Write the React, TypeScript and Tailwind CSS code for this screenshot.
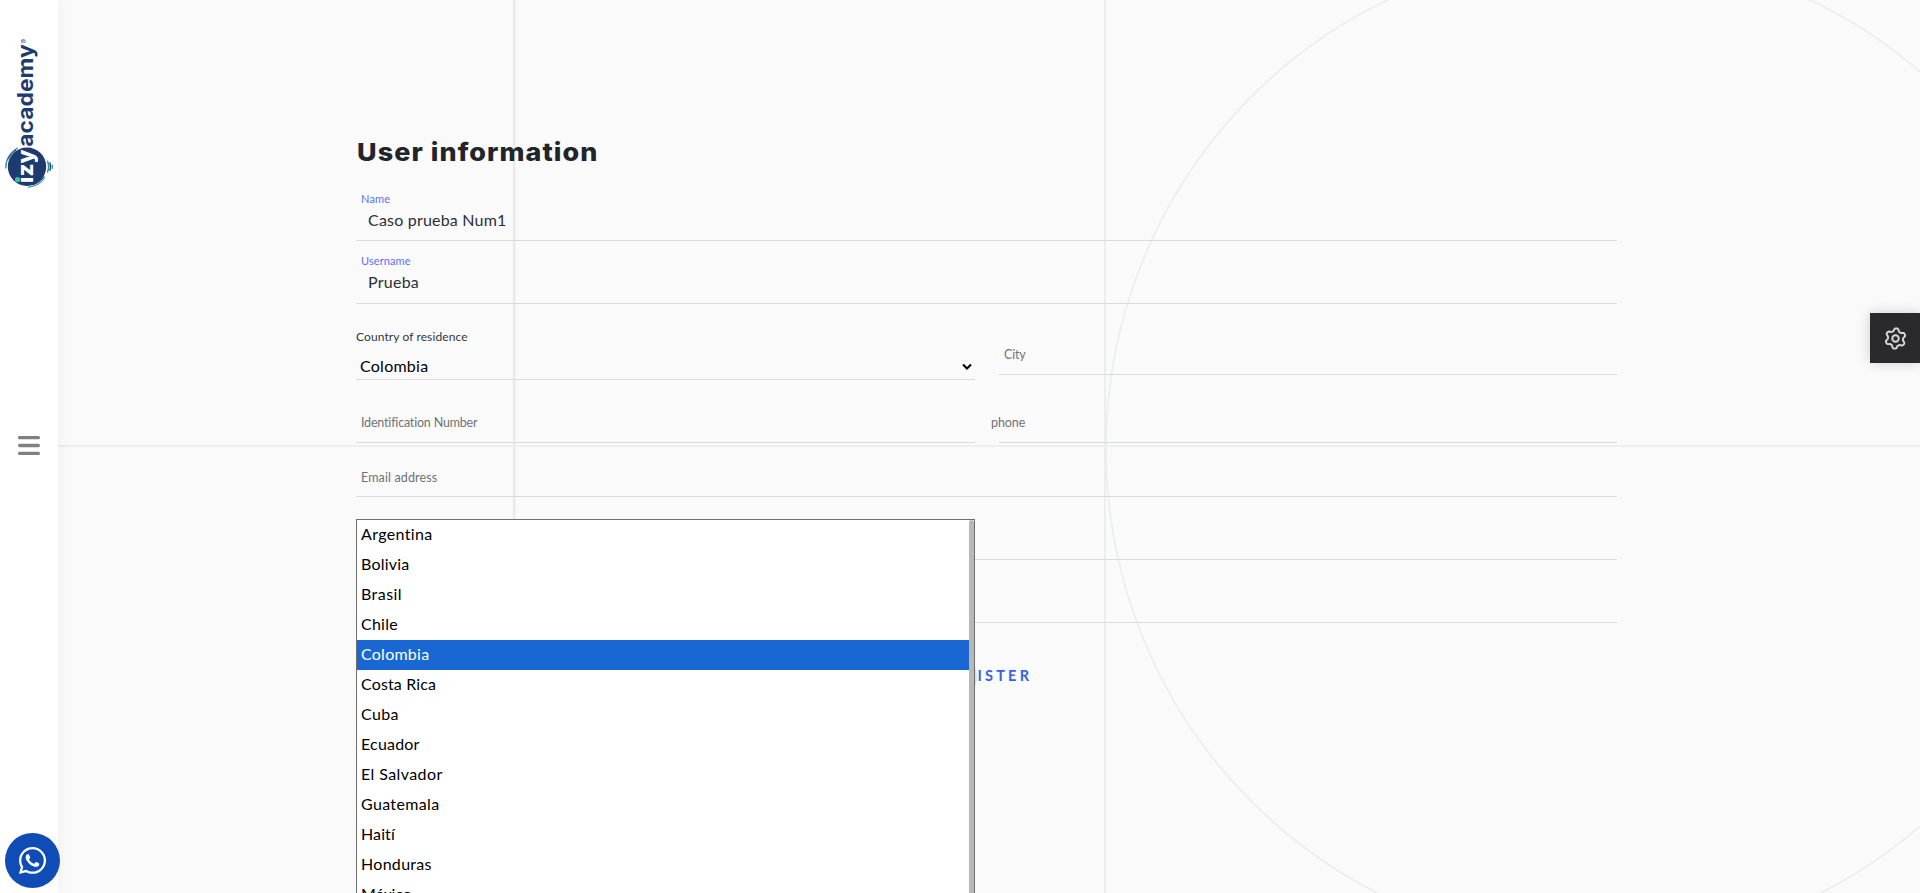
import type { ReactNode } from "react";
import { FaWhatsapp } from "react-icons/fa";

const countries = [
  { name: "Argentina", tracking: "tracking-[0.35px]" },
  { name: "Bolivia", tracking: "tracking-[0.2px]" },
  { name: "Brasil", tracking: "tracking-[0.45px]" },
  { name: "Chile", tracking: "tracking-[0.25px]" },
  { name: "Colombia", tracking: "tracking-[0.25px]", selected: true },
  { name: "Costa Rica", tracking: "tracking-[0.15px]" },
  { name: "Cuba", tracking: "tracking-[0.35px]" },
  { name: "Ecuador", tracking: "tracking-[0.2px]" },
  { name: "El Salvador", tracking: "tracking-[0.4px]" },
  { name: "Guatemala", tracking: "tracking-[0.35px]" },
  { name: "Haití", tracking: "tracking-[0.1px]" },
  { name: "Honduras", tracking: "tracking-[0.3px]" },
  { name: "México", tracking: "tracking-[-0.1px]" },
];

function gearPath() {
  const pts: string[] = [];
  for (let i = 0; i < 120; i++) {
    const a = (i / 120) * Math.PI * 2;
    const lobe = Math.tanh(1.6 * Math.cos(6 * (a + Math.PI / 2 - 0.1)));
    const r = 8.5 + 1.35 * lobe;
    pts.push(`${(12 + r * Math.cos(a)).toFixed(2)} ${(12 + r * Math.sin(a)).toFixed(2)}`);
  }
  return `M${pts.join("L")}Z`;
}

function Logo() {
  return (
    <svg width="58" height="200" viewBox="0 0 58 200" className="block">
      <g fill="none" strokeLinecap="round">
        <path d="M5.8 168 A22 22 0 0 1 17.5 148" stroke="#3d8f97" strokeWidth="1.3" />
        <path d="M8 159 A21 21 0 0 1 16 150" stroke="#1d3b70" strokeWidth="1" />
        <path d="M28.5 187.2 A21.5 21.5 0 0 0 44.5 178" stroke="#3d9d95" strokeWidth="1.3" />
        <path d="M33 184.8 A20 20 0 0 0 44 176.5" stroke="#1d3b70" strokeWidth="1" />
        <path d="M47.6 161.2 Q49.6 166.5 47.6 172" stroke="#35958f" strokeWidth="1.5" />
        <path d="M50 163 Q51 166.5 50 170.2" stroke="#1d3b70" strokeWidth="1.4" />
        <path d="M52.3 165.2 V168.4" stroke="#35958f" strokeWidth="1.3" />
      </g>
      <circle cx="27" cy="166.7" r="19.2" fill="#1d3b70" />
      <g transform="translate(32.6 183) rotate(-90)" className="[font-family:Inter,sans-serif] font-bold">
        <text x="0" y="0" fontSize="21.5" fontWeight="800" textLength="33.5" lengthAdjust="spacingAndGlyphs" fill="#fff">izy</text>
        <text x="36.3" y="0" fontSize="21" textLength="102.5" lengthAdjust="spacingAndGlyphs" fill="#1d3b70">academy</text>
        <text x="139.6" y="-5.8" fontSize="7" fontWeight="400" fill="#1d3b70">®</text>
      </g>
      <circle cx="17.6" cy="179.6" r="2.6" fill="#3fbf95" />
    </svg>
  );
}

function Sidebar() {
  return (
    <aside className="relative z-10 flex h-full w-[58px] shrink-0 flex-col items-center bg-white shadow-[0_0_20px_rgba(0,0,0,0.05)]">
      <Logo />
      <svg aria-label="Menu" className="mt-[235px]" width="22" height="21" viewBox="0 0 22 21" fill="#808080">
        <rect y="0.9" width="22" height="3.4" rx="1.6" />
        <rect y="8.8" width="22" height="3.4" rx="1.6" />
        <rect y="16.7" width="22" height="3.4" rx="1.6" />
      </svg>
    </aside>
  );
}

function Backdrop() {
  return (
    <svg className="absolute inset-0" width="1920" height="893" viewBox="0 0 1920 893" fill="none">
      <path d="M514.2 0V893" stroke="#e7ebed" strokeWidth="2.6" />
      <path d="M1105 0V893" stroke="#ebeef0" strokeWidth="2" />
      <path d="M58 446H1920" stroke="#eaf0ee" strokeWidth="2" />
      <ellipse cx="1599" cy="449" rx="493" ry="497" stroke="#e9eeec" strokeWidth="1.6" />
    </svg>
  );
}

function Field({ className, children }: { className: string; children?: ReactNode }) {
  return <div className={`border-b border-[#dadbdb] ${className}`}>{children}</div>;
}

export default function App() {
  return (
    <div className="relative flex h-[893px] w-full overflow-hidden bg-[#fafafa] [font-family:Lato,sans-serif]">
      <Backdrop />
      <Sidebar />

      <main className="relative ml-[298px] w-[1261px] pt-[137px]">
        <h1 className="ml-[0.5px] h-[30px] origin-left scale-x-[1.077] whitespace-nowrap text-[25px] leading-[30px] font-extrabold tracking-[1px] text-[#212529] [font-family:Inter,sans-serif]">
          User information
        </h1>

        <Field className="h-[74px] pt-6">
          <div className="pl-[5px] text-[11px] leading-4 tracking-[0.2px] text-[#5a70f5]">Name</div>
          <div className="mt-[3px] pl-3 text-base leading-5 tracking-[0.2px] text-[#2c2f38]">Caso prueba Num1</div>
        </Field>
        <Field className="h-[63px] pt-3">
          <div className="pl-[5px] text-[11px] leading-4 tracking-[0.1px] text-[#5a70f5]">Username</div>
          <div className="mt-[3px] pl-3 text-base leading-5 tracking-[0.25px] text-[#2c2f38]">Prueba</div>
        </Field>

        <div className="flex h-[76px] items-start gap-6">
          <Field className="h-[76px] w-[619px] pt-[25px]">
            <div className="text-[12px] leading-4 tracking-[0.1px] text-[#33373b]">Country of residence</div>
            <div className="mt-[11px] flex items-center justify-between pr-[3px] pl-1 text-base leading-5 tracking-[0.25px] text-black">
              Colombia
              <svg width="10" height="8" viewBox="0 0 10 8" fill="none">
                <path d="M1 2.5l4 4 4-4" stroke="#000" strokeWidth="2.1" />
              </svg>
            </div>
          </Field>
          <Field className="h-[71px] w-[618px] pt-[43px]">
            <div className="pl-[5px] text-[12.5px] leading-4 tracking-[-0.2px] text-[#6f7275]">City</div>
          </Field>
        </div>

        <div className="flex h-[63px] items-start gap-6">
          <Field className="h-[63px] w-[619px] pt-[35px]">
            <div className="pl-[5px] text-[12.5px] leading-4 tracking-[-0.19px] text-[#6f7275]">Identification Number</div>
          </Field>
          <Field className="h-[63px] w-[618px] pt-[35px]">
            <div className="-ml-2 text-[12.5px] leading-4 tracking-[-0.1px] text-[#6f7275]">phone</div>
          </Field>
        </div>

        <Field className="h-[54px] pt-[27px]">
          <div className="pl-[5px] text-[12.5px] leading-4 tracking-[0.13px] text-[#6f7275]">Email address</div>
        </Field>
        <Field className="h-[63px]" />
        <Field className="h-[63px]" />

        <button className="relative mt-[43px] ml-[584px] block text-[14.5px] leading-5 font-bold tracking-[3.2px] text-[#3560e8]">
          <span className="absolute top-[-15px] left-[-15px] size-[52px] rounded-full bg-[#c9e4ec]" />
          <span className="relative">REGISTER</span>
        </button>

        <div className="absolute top-[519px] left-0 flex h-[400px] w-[619px] border border-[#6f6f6f] bg-white">
          <ul className="flex-1">
            {countries.map((c) => (
              <li
                key={c.name}
                className={`h-[30px] pl-1 text-base leading-[28px] ${c.tracking} ${
                  c.selected ? "bg-[#1967d2] text-white" : "text-black"
                }`}
              >
                {c.name}
              </li>
            ))}
          </ul>
          <div className="w-[5px] rounded-t-[3px] bg-[#b8b8b8]" />
        </div>
      </main>

      <button
        aria-label="Settings"
        className="absolute top-[313px] right-0 flex size-[50px] items-center justify-center bg-[#2a292e] shadow-[0_0_12px_rgba(0,0,0,0.18)]"
      >
        <svg width="25" height="25" viewBox="0 0 24 24" fill="none" stroke="#d6d6d6" strokeWidth="1.9" strokeLinejoin="round">
          <path d={gearPath()} />
          <circle cx="12" cy="12" r="3.1" />
        </svg>
      </button>

      <button
        aria-label="WhatsApp"
        className="absolute top-[833px] left-[5px] z-20 flex size-[55px] items-center justify-center rounded-full bg-[#0f4cb5]"
      >
        <FaWhatsapp size={31} color="#fff" />
      </button>
    </div>
  );
}
